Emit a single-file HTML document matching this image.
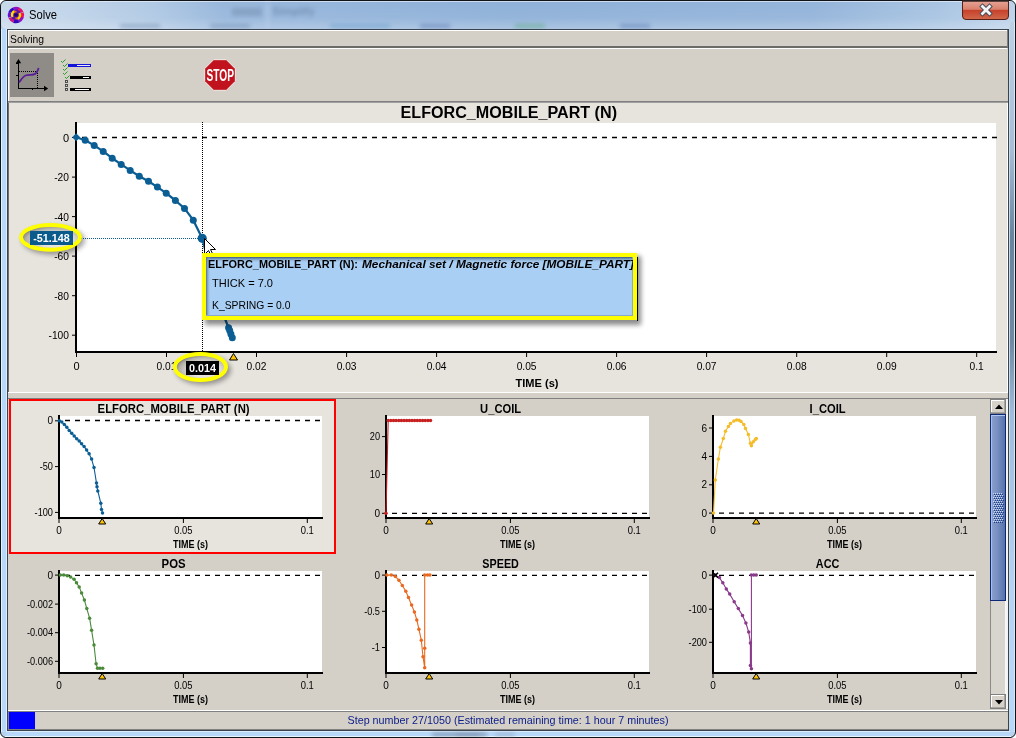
<!DOCTYPE html>
<html><head><meta charset="utf-8"><title>Solve</title>
<style>html,body{margin:0;padding:0;width:1016px;height:738px;overflow:hidden;background:#ffffff;font-family:"Liberation Sans",sans-serif}svg{display:block;will-change:transform}</style>
</head><body><svg width="1016" height="738" viewBox="0 0 1016 738" font-family="Liberation Sans, sans-serif"><defs><linearGradient id="tb" x1="0" y1="0" x2="1" y2="0"><stop offset="0" stop-color="#c8d9ea"/><stop offset="0.06" stop-color="#c2d5e9"/><stop offset="0.15" stop-color="#b0c9e4"/><stop offset="0.22" stop-color="#98b7dc"/><stop offset="0.5" stop-color="#8fb1d8"/><stop offset="0.8" stop-color="#94b4da"/><stop offset="0.92" stop-color="#a8c4e2"/><stop offset="1" stop-color="#bcd2ea"/></linearGradient><linearGradient id="tbv" x1="0" y1="0" x2="0" y2="1"><stop offset="0" stop-color="#fff" stop-opacity="0"/><stop offset="0.6" stop-color="#fff" stop-opacity="0.05"/><stop offset="1" stop-color="#fff" stop-opacity="0.25"/></linearGradient><linearGradient id="rbv" x1="0" y1="0" x2="0" y2="1"><stop offset="0" stop-color="#bcd0e6"/><stop offset="0.18" stop-color="#a8bed6"/><stop offset="0.3" stop-color="#6a84a0"/><stop offset="0.45" stop-color="#7088a4"/><stop offset="0.55" stop-color="#a0bcdc"/><stop offset="0.8" stop-color="#b4d2f4"/><stop offset="1" stop-color="#b8d8fa"/></linearGradient><linearGradient id="lb" x1="0" y1="0" x2="1" y2="0"><stop offset="0" stop-color="#9ab0c8"/><stop offset="0.3" stop-color="#b8d6f4"/><stop offset="1" stop-color="#bcdaf6"/></linearGradient><linearGradient id="rb" x1="0" y1="0" x2="1" y2="0"><stop offset="0" stop-color="#a0bcdc"/><stop offset="0.7" stop-color="#b0cceb"/><stop offset="1" stop-color="#8ea8c4"/></linearGradient><linearGradient id="cls" x1="0" y1="0" x2="0" y2="1"><stop offset="0" stop-color="#e8a496"/><stop offset="0.45" stop-color="#d8806c"/><stop offset="0.5" stop-color="#c8402a"/><stop offset="1" stop-color="#d06a4c"/></linearGradient><linearGradient id="thumb" x1="0" y1="0" x2="1" y2="0"><stop offset="0" stop-color="#8ca0cc"/><stop offset="0.4" stop-color="#7a92c4"/><stop offset="1" stop-color="#5670a8"/></linearGradient><linearGradient id="ttop" x1="0" y1="0" x2="0" y2="1"><stop offset="0" stop-color="#3a5a80"/><stop offset="1" stop-color="#acd0f4" stop-opacity="0"/></linearGradient><linearGradient id="tleft" x1="0" y1="0" x2="1" y2="0"><stop offset="0" stop-color="#506c90"/><stop offset="1" stop-color="#acd0f4" stop-opacity="0"/></linearGradient><radialGradient id="lens" cx="0.58" cy="0.62" r="0.62"><stop offset="0.45" stop-color="#e6e2dc"/><stop offset="0.8" stop-color="#b4b0aa"/><stop offset="1" stop-color="#74706c"/></radialGradient><filter id="sh" x="-20%" y="-20%" width="150%" height="150%"><feGaussianBlur stdDeviation="2.5"/></filter><filter id="blur1" x="-20%" y="-50%" width="140%" height="200%"><feGaussianBlur stdDeviation="2.2"/></filter><pattern id="grip" width="2" height="2" patternUnits="userSpaceOnUse"><rect width="1" height="1" fill="#dfe6f6"/></pattern></defs><rect x="0" y="0" width="1016" height="738" fill="#ffffff"/><rect x="0.5" y="0.5" width="1015" height="737" rx="5.5" ry="5.5" fill="#b9d3ee" stroke="#101418"/><rect x="1" y="1" width="1014" height="28" rx="6" fill="url(#tb)"/><rect x="1" y="1" width="1014" height="28" rx="6" fill="url(#tbv)"/><g filter="url(#blur1)" opacity="0.4"><rect x="232" y="8" width="30" height="8" fill="#6880a0"/><rect x="266" y="2" width="3" height="26" fill="#c8d8ec"/><text x="272" y="15" font-size="11" font-weight="bold" fill="#405878">Simplify</text><rect x="120" y="24" width="40" height="4" fill="#5878a0"/><rect x="210" y="24" width="40" height="4" fill="#5878a0"/><rect x="330" y="24" width="60" height="4" fill="#5090c0"/><rect x="420" y="24" width="30" height="4" fill="#4060a0"/><rect x="515" y="24" width="30" height="4" fill="#40a060"/><rect x="620" y="24" width="30" height="4" fill="#4060a0"/></g><rect x="6" y="1" width="1004" height="1" fill="#e8f0f8" opacity="0.7"/><rect x="1" y="29" width="6" height="703" fill="#b8d8fa" /><rect x="1" y="29" width="1" height="703" fill="#dff2ff" /><rect x="6" y="29" width="1" height="703" fill="#dcecfb" /><rect x="1009" y="22" width="6" height="710" fill="url(#rbv)"/><rect x="1014" y="22" width="1" height="710" fill="#dde6ef" /><rect x="1009" y="22" width="1" height="710" fill="#c8d8e8" /><rect x="6" y="731" width="1004" height="6" fill="#b8d8fa" /><rect x="6" y="731" width="1004" height="1" fill="#dcecfb" /><rect x="5" y="736" width="1006" height="1" fill="#e8f6ff" /><g filter="url(#blur1)" opacity="0.55"><rect x="432" y="733" width="55" height="3" fill="#405068"/><rect x="455" y="733" width="25" height="3" fill="#202838"/><rect x="495" y="733" width="20" height="3" fill="#8090a8"/></g><rect x="7.5" y="29.5" width="1001" height="701" fill="none" stroke="#3a4450"/><rect x="8" y="30" width="1000" height="700" fill="#d4d0c8" /><path d="M16 15 L8.29 17.80 A8.2 8.2 0 0 1 8.63 11.41 Z" fill="#6010d8"/><path d="M16 15 L8.57 11.53 A8.2 8.2 0 0 1 13.33 7.25 Z" fill="#2808c8"/><path d="M16 15 L13.20 7.29 A8.2 8.2 0 0 1 19.59 7.63 Z" fill="#9010c0"/><path d="M16 15 L18.80 7.29 A8.2 8.2 0 0 1 23.49 11.66 Z" fill="#e01070"/><path d="M16 15 L23.71 12.20 A8.2 8.2 0 0 1 23.37 18.59 Z" fill="#f01060"/><path d="M16 15 L23.71 17.80 A8.2 8.2 0 0 1 19.34 22.49 Z" fill="#9010c8"/><path d="M16 15 L19.47 22.43 A8.2 8.2 0 0 1 13.06 22.66 Z" fill="#3008c0"/><path d="M16 15 L13.20 22.71 A8.2 8.2 0 0 1 8.51 18.34 Z" fill="#d01080"/><circle cx="16" cy="15" r="5.3" fill="#5818a0"/><path d="M12.5 17 A4 4 0 0 1 14.5 11.2" stroke="#ffe000" stroke-width="2.4" fill="none"/><path d="M19.5 13 A4 4 0 0 1 17.5 18.8" stroke="#ffd000" stroke-width="2.4" fill="none"/><path d="M14.5 11.2 L16.5 12" stroke="#ff6020" stroke-width="1.5"/><path d="M17.5 18.8 L15.5 18" stroke="#ff6020" stroke-width="1.5"/><circle cx="16" cy="15" r="1.8" fill="#180070"/><text x="29" y="19" font-size="12" font-weight="normal" text-anchor="start" fill="#000" textLength="28" lengthAdjust="spacingAndGlyphs" >Solve</text><path d="M962.5 1 L962.5 16 Q962.5 19.5 966 19.5 L1005 19.5 Q1008.5 19.5 1008.5 16 L1008.5 1 Z" fill="url(#cls)" stroke="#5a2018"/><path d="M962.5 1 L1008.5 1" stroke="#202428"/><path d="M982.5 6.5 L989.5 13.5 M989.5 6.5 L982.5 13.5" stroke="#404858" stroke-width="4.6" stroke-linecap="square"/><path d="M982.5 6.5 L989.5 13.5 M989.5 6.5 L982.5 13.5" stroke="#f4f4f4" stroke-width="2.8" stroke-linecap="square"/><rect x="8" y="30" width="999" height="1" fill="#ffffff" /><rect x="8" y="30" width="1" height="17" fill="#ffffff" /><rect x="8" y="46" width="1000" height="2" fill="#6c6c68" /><rect x="1007" y="30" width="1" height="17" fill="#808080" /><text x="10" y="43" font-size="11" font-weight="normal" text-anchor="start" fill="#000" textLength="34" lengthAdjust="spacingAndGlyphs" >Solving</text><rect x="8" y="48" width="999" height="1" fill="#ffffff" /><rect x="8" y="48" width="1" height="53" fill="#ffffff" /><rect x="8" y="101" width="1000" height="1" fill="#808080" /><rect x="8" y="102" width="1000" height="1" fill="#a0a0a0" /><rect x="10" y="53" width="44" height="44" fill="#8f8b86" /><rect x="18" y="60" width="1" height="29" fill="#000" /><path d="M15.8 63.2 L18.5 59 L21.2 63.2 Z" fill="#000"/><rect x="16" y="63" width="2" height="1" fill="#000" /><rect x="16" y="75" width="2" height="1" fill="#000" /><rect x="18" y="88" width="29" height="1" fill="#000" /><path d="M44 85.8 L48.2 88.5 L44 91.2 Z" fill="#000"/><rect x="32" y="89" width="1" height="1" fill="#000" /><rect x="19" y="71" width="1" height="1" fill="#000" /><rect x="21" y="71" width="1" height="1" fill="#000" /><rect x="23" y="71" width="1" height="1" fill="#000" /><rect x="25" y="71" width="1" height="1" fill="#000" /><rect x="27" y="71" width="1" height="1" fill="#000" /><rect x="29" y="71" width="1" height="1" fill="#000" /><rect x="31" y="71" width="1" height="1" fill="#000" /><rect x="33" y="71" width="1" height="1" fill="#000" /><rect x="35" y="71" width="1" height="1" fill="#000" /><rect x="37" y="73" width="1" height="1" fill="#000" /><rect x="37" y="75" width="1" height="1" fill="#000" /><rect x="37" y="77" width="1" height="1" fill="#000" /><rect x="37" y="79" width="1" height="1" fill="#000" /><rect x="37" y="81" width="1" height="1" fill="#000" /><rect x="37" y="83" width="1" height="1" fill="#000" /><rect x="37" y="85" width="1" height="1" fill="#000" /><rect x="37" y="87" width="1" height="1" fill="#000" /><path d="M19 82.4 C21 80 23 76.5 25.5 75.5 C28 74.5 31 75 33.5 74.5 C36 74 37.5 72 38.6 67.9" stroke="#5a1c98" stroke-width="1.8" fill="none"/><path d="M61 61.0 L62.5 62.5 L65.5 59.5" stroke="#18a018" stroke-width="0.95" fill="none"/><path d="M63 65.0 L64.5 66.5 L67.5 63.5" stroke="#18a018" stroke-width="0.95" fill="none"/><path d="M63 69.0 L64.5 70.5 L67.5 67.5" stroke="#18a018" stroke-width="0.95" fill="none"/><path d="M63 73.0 L64.5 74.5 L67.5 71.5" stroke="#18a018" stroke-width="0.95" fill="none"/><path d="M65 77.0 L66.5 78.5 L69.5 75.5" stroke="#18a018" stroke-width="0.95" fill="none"/><rect x="65.5" y="80.5" width="2" height="2" fill="#d8d8d8" stroke="#404040" stroke-width="0.9"/><rect x="65.5" y="84.5" width="2" height="2" fill="#d8d8d8" stroke="#404040" stroke-width="0.9"/><rect x="65.5" y="88.5" width="2" height="2" fill="#d8d8d8" stroke="#404040" stroke-width="0.9"/><rect x="68" y="64" width="23" height="3" fill="#1414d8" /><rect x="77" y="65" width="13" height="1" fill="#e8e8ff" /><rect x="70" y="76" width="21" height="3" fill="#000" /><rect x="83" y="77" width="6" height="1" fill="#fff" /><rect x="70" y="88" width="21" height="3" fill="#000" /><rect x="75" y="89" width="14" height="1" fill="#fff" /><polygon points="235.34,81.35 226.35,90.34 213.65,90.34 204.66,81.35 204.66,68.65 213.65,59.66 226.35,59.66 235.34,68.65" fill="#c0131e" stroke="#f0eeea" stroke-width="1"/><text x="220.3" y="80.6" font-size="16" font-weight="bold" text-anchor="middle" fill="#fff" textLength="27.5" lengthAdjust="spacingAndGlyphs" >STOP</text><rect x="8" y="103" width="1000" height="289" fill="#e7e3dd" /><rect x="8" y="103" width="1" height="289" fill="#707070" /><rect x="1007" y="103" width="1" height="290" fill="#ffffff" /><rect x="8" y="392" width="1000" height="1" fill="#ffffff" /><rect x="8" y="398" width="1000" height="1" fill="#808080" /><text x="508.8" y="118" font-size="16" font-weight="bold" text-anchor="middle" fill="#000" textLength="216.4" lengthAdjust="spacingAndGlyphs" >ELFORC_MOBILE_PART (N)</text><rect x="77" y="123" width="919" height="228" fill="#ffffff" /><line x1="77" y1="137.5" x2="997" y2="137.5" stroke="#000" stroke-width="1.7" stroke-dasharray="5 5" stroke-dashoffset="5"/><rect x="75" y="122" width="2" height="231" fill="#000" /><rect x="75" y="351" width="922" height="2" fill="#000" /><line x1="72" y1="137.5" x2="75" y2="137.5" stroke="#000" stroke-width="1"/><text x="69" y="141.5" font-size="11" font-weight="normal" text-anchor="end" fill="#000" >0</text><line x1="72" y1="177.1" x2="75" y2="177.1" stroke="#000" stroke-width="1"/><text x="69" y="181.1" font-size="11" font-weight="normal" text-anchor="end" fill="#000" textLength="14.79" lengthAdjust="spacingAndGlyphs" >-20</text><line x1="72" y1="216.6" x2="75" y2="216.6" stroke="#000" stroke-width="1"/><text x="69" y="220.6" font-size="11" font-weight="normal" text-anchor="end" fill="#000" textLength="14.79" lengthAdjust="spacingAndGlyphs" >-40</text><line x1="72" y1="256.1" x2="75" y2="256.1" stroke="#000" stroke-width="1"/><text x="69" y="260.1" font-size="11" font-weight="normal" text-anchor="end" fill="#000" textLength="14.79" lengthAdjust="spacingAndGlyphs" >-60</text><line x1="72" y1="295.7" x2="75" y2="295.7" stroke="#000" stroke-width="1"/><text x="69" y="299.7" font-size="11" font-weight="normal" text-anchor="end" fill="#000" textLength="14.79" lengthAdjust="spacingAndGlyphs" >-80</text><line x1="72" y1="335.2" x2="75" y2="335.2" stroke="#000" stroke-width="1"/><text x="69" y="339.2" font-size="11" font-weight="normal" text-anchor="end" fill="#000" textLength="20.48" lengthAdjust="spacingAndGlyphs" >-100</text><line x1="76.5" y1="353" x2="76.5" y2="357" stroke="#000" stroke-width="1"/><text x="76.5" y="370" font-size="11" font-weight="normal" text-anchor="middle" fill="#000" >0</text><line x1="166.5" y1="353" x2="166.5" y2="357" stroke="#000" stroke-width="1"/><text x="166.5" y="370" font-size="11" font-weight="normal" text-anchor="middle" fill="#000" textLength="19.91" lengthAdjust="spacingAndGlyphs" >0.01</text><line x1="256.5" y1="353" x2="256.5" y2="357" stroke="#000" stroke-width="1"/><text x="256.5" y="370" font-size="11" font-weight="normal" text-anchor="middle" fill="#000" textLength="19.91" lengthAdjust="spacingAndGlyphs" >0.02</text><line x1="346.6" y1="353" x2="346.6" y2="357" stroke="#000" stroke-width="1"/><text x="346.6" y="370" font-size="11" font-weight="normal" text-anchor="middle" fill="#000" textLength="19.91" lengthAdjust="spacingAndGlyphs" >0.03</text><line x1="436.6" y1="353" x2="436.6" y2="357" stroke="#000" stroke-width="1"/><text x="436.6" y="370" font-size="11" font-weight="normal" text-anchor="middle" fill="#000" textLength="19.91" lengthAdjust="spacingAndGlyphs" >0.04</text><line x1="526.6" y1="353" x2="526.6" y2="357" stroke="#000" stroke-width="1"/><text x="526.6" y="370" font-size="11" font-weight="normal" text-anchor="middle" fill="#000" textLength="19.91" lengthAdjust="spacingAndGlyphs" >0.05</text><line x1="616.6" y1="353" x2="616.6" y2="357" stroke="#000" stroke-width="1"/><text x="616.6" y="370" font-size="11" font-weight="normal" text-anchor="middle" fill="#000" textLength="19.91" lengthAdjust="spacingAndGlyphs" >0.06</text><line x1="706.6" y1="353" x2="706.6" y2="357" stroke="#000" stroke-width="1"/><text x="706.6" y="370" font-size="11" font-weight="normal" text-anchor="middle" fill="#000" textLength="19.91" lengthAdjust="spacingAndGlyphs" >0.07</text><line x1="796.7" y1="353" x2="796.7" y2="357" stroke="#000" stroke-width="1"/><text x="796.7" y="370" font-size="11" font-weight="normal" text-anchor="middle" fill="#000" textLength="19.91" lengthAdjust="spacingAndGlyphs" >0.08</text><line x1="886.7" y1="353" x2="886.7" y2="357" stroke="#000" stroke-width="1"/><text x="886.7" y="370" font-size="11" font-weight="normal" text-anchor="middle" fill="#000" textLength="19.91" lengthAdjust="spacingAndGlyphs" >0.09</text><line x1="976.7" y1="353" x2="976.7" y2="357" stroke="#000" stroke-width="1"/><text x="976.7" y="370" font-size="11" font-weight="normal" text-anchor="middle" fill="#000" textLength="14.22" lengthAdjust="spacingAndGlyphs" >0.1</text><text x="537" y="387" font-size="11" font-weight="bold" text-anchor="middle" fill="#000" textLength="43" lengthAdjust="spacingAndGlyphs" >TIME (s)</text><line x1="202.5" y1="122" x2="202.5" y2="351" stroke="#000" stroke-width="1" stroke-dasharray="1 1"/><line x1="77" y1="238.5" x2="202" y2="238.5" stroke="#0b5e94" stroke-width="1" stroke-dasharray="1 1"/><path d="M76.2,137.3 L85.2,140.2 L94.2,145.4 L103.2,151.4 L112.2,158.2 L121.2,164.4 L130.2,170.4 L139.3,176.2 L148.5,181.3 L157.4,187.1 L166.2,193.2 L175.4,200.5 L184.5,208.4 L193.3,220.2 L202.2,238.3 L211.1,272 L213,279.9 L215.6,288.8 L223.3,314.5 L228.6,327.8 L229.7,330.5 L230.9,334 L232.3,337.8" stroke="#0b5e94" stroke-width="2.25" fill="none" stroke-linejoin="round"/><path d="M72.2 137.3 L76.2 133.3 L80.2 137.3 L76.2 141.3 Z" fill="#0b5e94"/><circle cx="85.2" cy="140.2" r="3.5" fill="#0b5e94"/><circle cx="94.2" cy="145.4" r="3.5" fill="#0b5e94"/><circle cx="103.2" cy="151.4" r="3.5" fill="#0b5e94"/><circle cx="112.2" cy="158.2" r="3.5" fill="#0b5e94"/><circle cx="121.2" cy="164.4" r="3.5" fill="#0b5e94"/><circle cx="130.2" cy="170.4" r="3.5" fill="#0b5e94"/><circle cx="139.3" cy="176.2" r="3.5" fill="#0b5e94"/><circle cx="148.5" cy="181.3" r="3.5" fill="#0b5e94"/><circle cx="157.4" cy="187.1" r="3.5" fill="#0b5e94"/><circle cx="166.2" cy="193.2" r="3.5" fill="#0b5e94"/><circle cx="175.4" cy="200.5" r="3.5" fill="#0b5e94"/><circle cx="184.5" cy="208.4" r="3.5" fill="#0b5e94"/><circle cx="193.3" cy="220.2" r="3.5" fill="#0b5e94"/><circle cx="202.2" cy="238.3" r="4.6" fill="#0b5e94"/><circle cx="228.6" cy="327.8" r="3.5" fill="#0b5e94"/><circle cx="229.7" cy="330.5" r="3.5" fill="#0b5e94"/><circle cx="230.9" cy="334" r="3.5" fill="#0b5e94"/><circle cx="232.3" cy="337.8" r="3.5" fill="#0b5e94"/><path d="M229.5 360 L233.5 353.5 L237.5 360 Z" fill="#ffc400" stroke="#000" stroke-width="1"/><path d="M204.5 238.5 L204.5 254.5 L208.5 250.5 L211.5 256.5 L213.5 255.5 L210.5 249.5 L215.5 249.5 Z" fill="#fff" stroke="#000" stroke-width="1"/><rect x="205" y="256" width="436" height="69" fill="#000" opacity="0.45" filter="url(#sh)"/><rect x="202" y="253" width="435" height="67" fill="#ffff00" /><rect x="206" y="257" width="427" height="59" fill="#aacff4" /><rect x="206" y="257" width="427" height="6" fill="url(#ttop)" /><rect x="206" y="257" width="5" height="59" fill="url(#tleft)" /><rect x="206" y="315" width="427" height="1" fill="#8aa8cc" /><rect x="632" y="257" width="1" height="59" fill="#8aa8cc" /><rect x="637" y="257" width="1" height="64" fill="#000" /><text x="208" y="268" font-size="11" font-weight="bold" text-anchor="start" fill="#000" textLength="150" lengthAdjust="spacingAndGlyphs" >ELFORC_MOBILE_PART (N):</text><svg x="206" y="257" width="427" height="20" overflow="hidden"><text x="156" y="11" font-size="11.3" font-weight="bold" font-style="italic" textLength="272" lengthAdjust="spacingAndGlyphs">Mechanical set / Magnetic force [MOBILE_PART]</text></svg><text x="212" y="287" font-size="11" font-weight="normal" text-anchor="start" fill="#000" textLength="61" lengthAdjust="spacingAndGlyphs" >THICK = 7.0</text><text x="212" y="309" font-size="11" font-weight="normal" text-anchor="start" fill="#000" textLength="78.5" lengthAdjust="spacingAndGlyphs" >K_SPRING = 0.0</text><ellipse cx="53.5" cy="240.3" rx="31.5" ry="14.4" fill="#000" opacity="0.35" filter="url(#sh)"/><ellipse cx="50.5" cy="237.3" rx="29.5" ry="12.4" fill="url(#lens)" stroke="#ffff00" stroke-width="4"/><rect x="30" y="231" width="43" height="14" fill="#0b5a8c" /><text x="51.5" y="242" font-size="11" font-weight="bold" text-anchor="middle" fill="#fff" textLength="36.5" lengthAdjust="spacingAndGlyphs" >-51.148</text><ellipse cx="203.4" cy="370" rx="27.6" ry="15" fill="#000" opacity="0.35" filter="url(#sh)"/><ellipse cx="200.4" cy="367" rx="25.6" ry="13" fill="url(#lens)" stroke="#ffff00" stroke-width="4"/><rect x="186" y="361" width="33" height="14" fill="#000" /><text x="202.5" y="372" font-size="11" font-weight="bold" text-anchor="middle" fill="#fff" textLength="27" lengthAdjust="spacingAndGlyphs" >0.014</text><rect x="8" y="399" width="982" height="310" fill="#d4d0c8" /><rect x="9" y="399" width="327" height="155" fill="#ff0000" /><rect x="11" y="401" width="323" height="151" fill="#e7e3dd" /><text x="173.6" y="413" font-size="12.8" font-weight="bold" text-anchor="middle" fill="#000" textLength="152" lengthAdjust="spacingAndGlyphs" >ELFORC_MOBILE_PART (N)</text><rect x="60" y="416" width="262" height="101" fill="#fff" /><line x1="60" y1="420.5" x2="322" y2="420.5" stroke="#000" stroke-width="1.3" stroke-dasharray="5 5" stroke-dashoffset="5"/><rect x="58" y="415" width="2" height="104" fill="#000" /><rect x="58" y="517" width="265" height="2" fill="#000" /><line x1="55" y1="420.8" x2="58" y2="420.8" stroke="#000" stroke-width="1"/><text x="53" y="424.4" font-size="10" font-weight="normal" text-anchor="end" fill="#000" >0</text><line x1="55" y1="466.6" x2="58" y2="466.6" stroke="#000" stroke-width="1"/><text x="53" y="470.2" font-size="10" font-weight="normal" text-anchor="end" fill="#000" textLength="13.3" lengthAdjust="spacingAndGlyphs" >-50</text><line x1="55" y1="512.4" x2="58" y2="512.4" stroke="#000" stroke-width="1"/><text x="53" y="516.0" font-size="10" font-weight="normal" text-anchor="end" fill="#000" textLength="18.41" lengthAdjust="spacingAndGlyphs" >-100</text><line x1="59" y1="519" x2="59" y2="523" stroke="#000" stroke-width="1"/><text x="59" y="534" font-size="10" font-weight="normal" text-anchor="middle" fill="#000" >0</text><line x1="183.4" y1="519" x2="183.4" y2="523" stroke="#000" stroke-width="1"/><text x="183.4" y="534" font-size="10" font-weight="normal" text-anchor="middle" fill="#000" textLength="18.3" lengthAdjust="spacingAndGlyphs" >0.05</text><line x1="307.3" y1="519" x2="307.3" y2="523" stroke="#000" stroke-width="1"/><text x="307.3" y="534" font-size="10" font-weight="normal" text-anchor="middle" fill="#000" textLength="13.07" lengthAdjust="spacingAndGlyphs" >0.1</text><text x="190.5" y="548" font-size="11" font-weight="bold" text-anchor="middle" fill="#000" textLength="35" lengthAdjust="spacingAndGlyphs" >TIME (s)</text><path d="M98.7 524 L102.2 518.5 L105.7 524 Z" fill="#ffc400" stroke="#000" stroke-width="1"/><path d="M59.3,420.8 L61.8,422.1 L64.3,424.5 L66.8,427.2 L69.2,430.4 L71.7,433.3 L74.2,436.0 L76.7,438.8 L79.2,441.0 L81.6,443.8 L84.1,446.6 L86.6,450.0 L89.1,453.7 L91.6,459.1 L94.0,467.5 L96.5,483.1 L97.0,486.8 L97.8,490.9 L100.8,503.2 L101.5,509.4 L102.5,512.9" stroke="#0b5e94" stroke-width="1.1" fill="none"/><circle cx="59.3" cy="420.8" r="1.75" fill="#0b5e94"/><circle cx="61.8" cy="422.1" r="1.75" fill="#0b5e94"/><circle cx="64.3" cy="424.5" r="1.75" fill="#0b5e94"/><circle cx="66.8" cy="427.2" r="1.75" fill="#0b5e94"/><circle cx="69.2" cy="430.4" r="1.75" fill="#0b5e94"/><circle cx="71.7" cy="433.3" r="1.75" fill="#0b5e94"/><circle cx="74.2" cy="436.0" r="1.75" fill="#0b5e94"/><circle cx="76.7" cy="438.8" r="1.75" fill="#0b5e94"/><circle cx="79.2" cy="441.0" r="1.75" fill="#0b5e94"/><circle cx="81.6" cy="443.8" r="1.75" fill="#0b5e94"/><circle cx="84.1" cy="446.6" r="1.75" fill="#0b5e94"/><circle cx="86.6" cy="450.0" r="1.75" fill="#0b5e94"/><circle cx="89.1" cy="453.7" r="1.75" fill="#0b5e94"/><circle cx="91.6" cy="459.1" r="1.75" fill="#0b5e94"/><circle cx="94.0" cy="467.5" r="1.75" fill="#0b5e94"/><circle cx="96.5" cy="483.1" r="1.75" fill="#0b5e94"/><circle cx="97.0" cy="486.8" r="1.75" fill="#0b5e94"/><circle cx="97.8" cy="490.9" r="1.75" fill="#0b5e94"/><circle cx="100.8" cy="503.2" r="1.75" fill="#0b5e94"/><circle cx="101.5" cy="509.4" r="1.75" fill="#0b5e94"/><circle cx="102.5" cy="512.9" r="1.75" fill="#0b5e94"/><text x="500.6" y="413" font-size="12.8" font-weight="bold" text-anchor="middle" fill="#000" textLength="41" lengthAdjust="spacingAndGlyphs" >U_COIL</text><rect x="387" y="416" width="262" height="101" fill="#fff" /><line x1="387" y1="513.3" x2="649" y2="513.3" stroke="#000" stroke-width="1.3" stroke-dasharray="5 5" stroke-dashoffset="5"/><rect x="385" y="415" width="2" height="104" fill="#000" /><rect x="385" y="517" width="265" height="2" fill="#000" /><line x1="382" y1="436.6" x2="385" y2="436.6" stroke="#000" stroke-width="1"/><text x="380" y="440.2" font-size="10" font-weight="normal" text-anchor="end" fill="#000" textLength="10.23" lengthAdjust="spacingAndGlyphs" >20</text><line x1="382" y1="474.5" x2="385" y2="474.5" stroke="#000" stroke-width="1"/><text x="380" y="478.1" font-size="10" font-weight="normal" text-anchor="end" fill="#000" textLength="10.23" lengthAdjust="spacingAndGlyphs" >10</text><line x1="382" y1="513.3" x2="385" y2="513.3" stroke="#000" stroke-width="1"/><text x="380" y="516.9" font-size="10" font-weight="normal" text-anchor="end" fill="#000" >0</text><line x1="386" y1="519" x2="386" y2="523" stroke="#000" stroke-width="1"/><text x="386" y="534" font-size="10" font-weight="normal" text-anchor="middle" fill="#000" >0</text><line x1="510.4" y1="519" x2="510.4" y2="523" stroke="#000" stroke-width="1"/><text x="510.4" y="534" font-size="10" font-weight="normal" text-anchor="middle" fill="#000" textLength="18.3" lengthAdjust="spacingAndGlyphs" >0.05</text><line x1="634.3" y1="519" x2="634.3" y2="523" stroke="#000" stroke-width="1"/><text x="634.3" y="534" font-size="10" font-weight="normal" text-anchor="middle" fill="#000" textLength="13.07" lengthAdjust="spacingAndGlyphs" >0.1</text><text x="517.5" y="548" font-size="11" font-weight="bold" text-anchor="middle" fill="#000" textLength="35" lengthAdjust="spacingAndGlyphs" >TIME (s)</text><path d="M425.7 524 L429.2 518.5 L432.7 524 Z" fill="#ffc400" stroke="#000" stroke-width="1"/><path d="M386.0,513.3 L388.2,420.6 L390.8,420.6 L393.5,420.6 L396.1,420.6 L398.8,420.6 L401.4,420.6 L404.1,420.6 L406.7,420.6 L409.4,420.6 L412.0,420.6 L414.6,420.6 L417.3,420.6 L419.9,420.6 L422.6,420.6 L425.2,420.6 L427.9,420.6 L430.5,420.6" stroke="#c82020" stroke-width="1.1" fill="none"/><circle cx="386.0" cy="513.3" r="1.75" fill="#c82020"/><circle cx="388.2" cy="420.6" r="1.75" fill="#c82020"/><circle cx="390.8" cy="420.6" r="1.75" fill="#c82020"/><circle cx="393.5" cy="420.6" r="1.75" fill="#c82020"/><circle cx="396.1" cy="420.6" r="1.75" fill="#c82020"/><circle cx="398.8" cy="420.6" r="1.75" fill="#c82020"/><circle cx="401.4" cy="420.6" r="1.75" fill="#c82020"/><circle cx="404.1" cy="420.6" r="1.75" fill="#c82020"/><circle cx="406.7" cy="420.6" r="1.75" fill="#c82020"/><circle cx="409.4" cy="420.6" r="1.75" fill="#c82020"/><circle cx="412.0" cy="420.6" r="1.75" fill="#c82020"/><circle cx="414.6" cy="420.6" r="1.75" fill="#c82020"/><circle cx="417.3" cy="420.6" r="1.75" fill="#c82020"/><circle cx="419.9" cy="420.6" r="1.75" fill="#c82020"/><circle cx="422.6" cy="420.6" r="1.75" fill="#c82020"/><circle cx="425.2" cy="420.6" r="1.75" fill="#c82020"/><circle cx="427.9" cy="420.6" r="1.75" fill="#c82020"/><circle cx="430.5" cy="420.6" r="1.75" fill="#c82020"/><text x="827.6" y="413" font-size="12.8" font-weight="bold" text-anchor="middle" fill="#000" textLength="36" lengthAdjust="spacingAndGlyphs" >I_COIL</text><rect x="714" y="416" width="262" height="101" fill="#fff" /><line x1="714" y1="513.1" x2="976" y2="513.1" stroke="#000" stroke-width="1.3" stroke-dasharray="5 5" stroke-dashoffset="5"/><rect x="712" y="415" width="2" height="104" fill="#000" /><rect x="712" y="517" width="265" height="2" fill="#000" /><line x1="709" y1="428" x2="712" y2="428" stroke="#000" stroke-width="1"/><text x="707" y="431.6" font-size="10" font-weight="normal" text-anchor="end" fill="#000" >6</text><line x1="709" y1="456.4" x2="712" y2="456.4" stroke="#000" stroke-width="1"/><text x="707" y="460.0" font-size="10" font-weight="normal" text-anchor="end" fill="#000" >4</text><line x1="709" y1="484.8" x2="712" y2="484.8" stroke="#000" stroke-width="1"/><text x="707" y="488.4" font-size="10" font-weight="normal" text-anchor="end" fill="#000" >2</text><line x1="709" y1="513.1" x2="712" y2="513.1" stroke="#000" stroke-width="1"/><text x="707" y="516.7" font-size="10" font-weight="normal" text-anchor="end" fill="#000" >0</text><line x1="713" y1="519" x2="713" y2="523" stroke="#000" stroke-width="1"/><text x="713" y="534" font-size="10" font-weight="normal" text-anchor="middle" fill="#000" >0</text><line x1="837.4" y1="519" x2="837.4" y2="523" stroke="#000" stroke-width="1"/><text x="837.4" y="534" font-size="10" font-weight="normal" text-anchor="middle" fill="#000" textLength="18.3" lengthAdjust="spacingAndGlyphs" >0.05</text><line x1="961.3" y1="519" x2="961.3" y2="523" stroke="#000" stroke-width="1"/><text x="961.3" y="534" font-size="10" font-weight="normal" text-anchor="middle" fill="#000" textLength="13.07" lengthAdjust="spacingAndGlyphs" >0.1</text><text x="844.5" y="548" font-size="11" font-weight="bold" text-anchor="middle" fill="#000" textLength="35" lengthAdjust="spacingAndGlyphs" >TIME (s)</text><path d="M752.7 524 L756.2 518.5 L759.7 524 Z" fill="#ffc400" stroke="#000" stroke-width="1"/><path d="M713.5,513.0 L715.3,480.0 L718.4,459.0 L720.4,447.2 L723.3,438.6 L725.5,431.3 L728.4,426.4 L730.4,423.4 L733.9,420.9 L736.6,420.0 L739.1,420.2 L741.0,421.5 L743.8,424.4 L745.5,428.5 L748.4,434.4 L750.4,443.3 L751.4,445.8 L753.3,441.8 L755.3,439.4 L756.3,438.4" stroke="#f4bc28" stroke-width="1.1" fill="none"/><circle cx="713.5" cy="513.0" r="1.75" fill="#f4bc28"/><circle cx="715.3" cy="480.0" r="1.75" fill="#f4bc28"/><circle cx="718.4" cy="459.0" r="1.75" fill="#f4bc28"/><circle cx="720.4" cy="447.2" r="1.75" fill="#f4bc28"/><circle cx="723.3" cy="438.6" r="1.75" fill="#f4bc28"/><circle cx="725.5" cy="431.3" r="1.75" fill="#f4bc28"/><circle cx="728.4" cy="426.4" r="1.75" fill="#f4bc28"/><circle cx="730.4" cy="423.4" r="1.75" fill="#f4bc28"/><circle cx="733.9" cy="420.9" r="1.75" fill="#f4bc28"/><circle cx="736.6" cy="420.0" r="1.75" fill="#f4bc28"/><circle cx="739.1" cy="420.2" r="1.75" fill="#f4bc28"/><circle cx="741.0" cy="421.5" r="1.75" fill="#f4bc28"/><circle cx="743.8" cy="424.4" r="1.75" fill="#f4bc28"/><circle cx="745.5" cy="428.5" r="1.75" fill="#f4bc28"/><circle cx="748.4" cy="434.4" r="1.75" fill="#f4bc28"/><circle cx="750.4" cy="443.3" r="1.75" fill="#f4bc28"/><circle cx="751.4" cy="445.8" r="1.75" fill="#f4bc28"/><circle cx="753.3" cy="441.8" r="1.75" fill="#f4bc28"/><circle cx="755.3" cy="439.4" r="1.75" fill="#f4bc28"/><circle cx="756.3" cy="438.4" r="1.75" fill="#f4bc28"/><text x="173.6" y="568" font-size="12.8" font-weight="bold" text-anchor="middle" fill="#000" textLength="24" lengthAdjust="spacingAndGlyphs" >POS</text><rect x="60" y="571" width="262" height="101" fill="#fff" /><line x1="60" y1="575.3" x2="322" y2="575.3" stroke="#000" stroke-width="1.3" stroke-dasharray="5 5" stroke-dashoffset="5"/><rect x="58" y="570" width="2" height="104" fill="#000" /><rect x="58" y="672" width="265" height="2" fill="#000" /><line x1="55" y1="575.1" x2="58" y2="575.1" stroke="#000" stroke-width="1"/><text x="53" y="578.7" font-size="10" font-weight="normal" text-anchor="end" fill="#000" >0</text><line x1="55" y1="604.1" x2="58" y2="604.1" stroke="#000" stroke-width="1"/><text x="53" y="607.7" font-size="10" font-weight="normal" text-anchor="end" fill="#000" textLength="26.09" lengthAdjust="spacingAndGlyphs" >-0.002</text><line x1="55" y1="632.7" x2="58" y2="632.7" stroke="#000" stroke-width="1"/><text x="53" y="636.3" font-size="10" font-weight="normal" text-anchor="end" fill="#000" textLength="26.09" lengthAdjust="spacingAndGlyphs" >-0.004</text><line x1="55" y1="661.3" x2="58" y2="661.3" stroke="#000" stroke-width="1"/><text x="53" y="664.9" font-size="10" font-weight="normal" text-anchor="end" fill="#000" textLength="26.09" lengthAdjust="spacingAndGlyphs" >-0.006</text><line x1="59" y1="674" x2="59" y2="678" stroke="#000" stroke-width="1"/><text x="59" y="689" font-size="10" font-weight="normal" text-anchor="middle" fill="#000" >0</text><line x1="183.4" y1="674" x2="183.4" y2="678" stroke="#000" stroke-width="1"/><text x="183.4" y="689" font-size="10" font-weight="normal" text-anchor="middle" fill="#000" textLength="18.3" lengthAdjust="spacingAndGlyphs" >0.05</text><line x1="307.3" y1="674" x2="307.3" y2="678" stroke="#000" stroke-width="1"/><text x="307.3" y="689" font-size="10" font-weight="normal" text-anchor="middle" fill="#000" textLength="13.07" lengthAdjust="spacingAndGlyphs" >0.1</text><text x="190.5" y="703" font-size="11" font-weight="bold" text-anchor="middle" fill="#000" textLength="35" lengthAdjust="spacingAndGlyphs" >TIME (s)</text><path d="M98.7 679 L102.2 673.5 L105.7 679 Z" fill="#ffc400" stroke="#000" stroke-width="1"/><path d="M60.3,575.1 L63.7,575.1 L67.2,575.8 L70.6,576.9 L74.1,579.3 L76.5,582.7 L79.2,586.9 L81.6,593.1 L84.4,600.0 L86.8,608.6 L89.6,618.2 L91.6,630.3 L94.0,645.1 L96.1,663.7 L97.5,668.2 L99.9,668.2 L102.7,668.2" stroke="#4a8a3a" stroke-width="1.1" fill="none"/><circle cx="60.3" cy="575.1" r="1.75" fill="#4a8a3a"/><circle cx="63.7" cy="575.1" r="1.75" fill="#4a8a3a"/><circle cx="67.2" cy="575.8" r="1.75" fill="#4a8a3a"/><circle cx="70.6" cy="576.9" r="1.75" fill="#4a8a3a"/><circle cx="74.1" cy="579.3" r="1.75" fill="#4a8a3a"/><circle cx="76.5" cy="582.7" r="1.75" fill="#4a8a3a"/><circle cx="79.2" cy="586.9" r="1.75" fill="#4a8a3a"/><circle cx="81.6" cy="593.1" r="1.75" fill="#4a8a3a"/><circle cx="84.4" cy="600.0" r="1.75" fill="#4a8a3a"/><circle cx="86.8" cy="608.6" r="1.75" fill="#4a8a3a"/><circle cx="89.6" cy="618.2" r="1.75" fill="#4a8a3a"/><circle cx="91.6" cy="630.3" r="1.75" fill="#4a8a3a"/><circle cx="94.0" cy="645.1" r="1.75" fill="#4a8a3a"/><circle cx="96.1" cy="663.7" r="1.75" fill="#4a8a3a"/><circle cx="97.5" cy="668.2" r="1.75" fill="#4a8a3a"/><circle cx="99.9" cy="668.2" r="1.75" fill="#4a8a3a"/><circle cx="102.7" cy="668.2" r="1.75" fill="#4a8a3a"/><text x="500.6" y="568" font-size="12.8" font-weight="bold" text-anchor="middle" fill="#000" textLength="36.5" lengthAdjust="spacingAndGlyphs" >SPEED</text><rect x="387" y="571" width="262" height="101" fill="#fff" /><line x1="387" y1="575.3" x2="649" y2="575.3" stroke="#000" stroke-width="1.3" stroke-dasharray="5 5" stroke-dashoffset="5"/><rect x="385" y="570" width="2" height="104" fill="#000" /><rect x="385" y="672" width="265" height="2" fill="#000" /><line x1="382" y1="575.1" x2="385" y2="575.1" stroke="#000" stroke-width="1"/><text x="380" y="578.7" font-size="10" font-weight="normal" text-anchor="end" fill="#000" >0</text><line x1="382" y1="611.3" x2="385" y2="611.3" stroke="#000" stroke-width="1"/><text x="380" y="614.9" font-size="10" font-weight="normal" text-anchor="end" fill="#000" textLength="15.85" lengthAdjust="spacingAndGlyphs" >-0.5</text><line x1="382" y1="647.5" x2="385" y2="647.5" stroke="#000" stroke-width="1"/><text x="380" y="651.1" font-size="10" font-weight="normal" text-anchor="end" fill="#000" textLength="8.18" lengthAdjust="spacingAndGlyphs" >-1</text><line x1="386" y1="674" x2="386" y2="678" stroke="#000" stroke-width="1"/><text x="386" y="689" font-size="10" font-weight="normal" text-anchor="middle" fill="#000" >0</text><line x1="510.4" y1="674" x2="510.4" y2="678" stroke="#000" stroke-width="1"/><text x="510.4" y="689" font-size="10" font-weight="normal" text-anchor="middle" fill="#000" textLength="18.3" lengthAdjust="spacingAndGlyphs" >0.05</text><line x1="634.3" y1="674" x2="634.3" y2="678" stroke="#000" stroke-width="1"/><text x="634.3" y="689" font-size="10" font-weight="normal" text-anchor="middle" fill="#000" textLength="13.07" lengthAdjust="spacingAndGlyphs" >0.1</text><text x="517.5" y="703" font-size="11" font-weight="bold" text-anchor="middle" fill="#000" textLength="35" lengthAdjust="spacingAndGlyphs" >TIME (s)</text><path d="M425.7 679 L429.2 673.5 L432.7 679 Z" fill="#ffc400" stroke="#000" stroke-width="1"/><path d="M386.8,575.1 L391.3,575.1 L395.4,576.5 L398.9,580.3 L402.3,585.5 L405.8,591.3 L408.5,597.5 L411.6,605.1 L414.4,612.0 L416.8,619.9 L418.9,629.2 L421.3,640.2 L423.0,656.8 L424.7,667.8 L424.7,648.2 L424.7,575.1 L427.5,575.1 L429.9,575.1" stroke="#e86a20" stroke-width="1.1" fill="none"/><circle cx="386.8" cy="575.1" r="1.75" fill="#e86a20"/><circle cx="391.3" cy="575.1" r="1.75" fill="#e86a20"/><circle cx="395.4" cy="576.5" r="1.75" fill="#e86a20"/><circle cx="398.9" cy="580.3" r="1.75" fill="#e86a20"/><circle cx="402.3" cy="585.5" r="1.75" fill="#e86a20"/><circle cx="405.8" cy="591.3" r="1.75" fill="#e86a20"/><circle cx="408.5" cy="597.5" r="1.75" fill="#e86a20"/><circle cx="411.6" cy="605.1" r="1.75" fill="#e86a20"/><circle cx="414.4" cy="612.0" r="1.75" fill="#e86a20"/><circle cx="416.8" cy="619.9" r="1.75" fill="#e86a20"/><circle cx="418.9" cy="629.2" r="1.75" fill="#e86a20"/><circle cx="421.3" cy="640.2" r="1.75" fill="#e86a20"/><circle cx="423.0" cy="656.8" r="1.75" fill="#e86a20"/><circle cx="424.7" cy="667.8" r="1.75" fill="#e86a20"/><circle cx="424.7" cy="648.2" r="1.75" fill="#e86a20"/><circle cx="424.7" cy="575.1" r="1.75" fill="#e86a20"/><circle cx="427.5" cy="575.1" r="1.75" fill="#e86a20"/><circle cx="429.9" cy="575.1" r="1.75" fill="#e86a20"/><text x="827.6" y="568" font-size="12.8" font-weight="bold" text-anchor="middle" fill="#000" textLength="23.5" lengthAdjust="spacingAndGlyphs" >ACC</text><rect x="714" y="571" width="262" height="101" fill="#fff" /><line x1="714" y1="575.3" x2="976" y2="575.3" stroke="#000" stroke-width="1.3" stroke-dasharray="5 5" stroke-dashoffset="5"/><rect x="712" y="570" width="2" height="104" fill="#000" /><rect x="712" y="672" width="265" height="2" fill="#000" /><line x1="709" y1="575.1" x2="712" y2="575.1" stroke="#000" stroke-width="1"/><text x="707" y="578.7" font-size="10" font-weight="normal" text-anchor="end" fill="#000" >0</text><line x1="709" y1="609.2" x2="712" y2="609.2" stroke="#000" stroke-width="1"/><text x="707" y="612.8" font-size="10" font-weight="normal" text-anchor="end" fill="#000" textLength="18.41" lengthAdjust="spacingAndGlyphs" >-100</text><line x1="709" y1="642.3" x2="712" y2="642.3" stroke="#000" stroke-width="1"/><text x="707" y="645.9" font-size="10" font-weight="normal" text-anchor="end" fill="#000" textLength="18.41" lengthAdjust="spacingAndGlyphs" >-200</text><line x1="713" y1="674" x2="713" y2="678" stroke="#000" stroke-width="1"/><text x="713" y="689" font-size="10" font-weight="normal" text-anchor="middle" fill="#000" >0</text><line x1="837.4" y1="674" x2="837.4" y2="678" stroke="#000" stroke-width="1"/><text x="837.4" y="689" font-size="10" font-weight="normal" text-anchor="middle" fill="#000" textLength="18.3" lengthAdjust="spacingAndGlyphs" >0.05</text><line x1="961.3" y1="674" x2="961.3" y2="678" stroke="#000" stroke-width="1"/><text x="961.3" y="689" font-size="10" font-weight="normal" text-anchor="middle" fill="#000" textLength="13.07" lengthAdjust="spacingAndGlyphs" >0.1</text><text x="844.5" y="703" font-size="11" font-weight="bold" text-anchor="middle" fill="#000" textLength="35" lengthAdjust="spacingAndGlyphs" >TIME (s)</text><path d="M752.7 679 L756.2 673.5 L759.7 679 Z" fill="#ffc400" stroke="#000" stroke-width="1"/><path d="M715.3,575.1 L719.4,577.6 L722.8,582.7 L726.3,588.9 L729.7,594.1 L734.2,601.7 L738.3,608.6 L742.5,615.5 L745.9,623.0 L748.7,632.0 L750.4,643.0 L750.4,665.4 L751.4,668.8 L751.4,575.1 L753.8,575.1 L756.2,575.1" stroke="#8a3a8a" stroke-width="1.1" fill="none"/><circle cx="715.3" cy="575.1" r="1.75" fill="#8a3a8a"/><circle cx="719.4" cy="577.6" r="1.75" fill="#8a3a8a"/><circle cx="722.8" cy="582.7" r="1.75" fill="#8a3a8a"/><circle cx="726.3" cy="588.9" r="1.75" fill="#8a3a8a"/><circle cx="729.7" cy="594.1" r="1.75" fill="#8a3a8a"/><circle cx="734.2" cy="601.7" r="1.75" fill="#8a3a8a"/><circle cx="738.3" cy="608.6" r="1.75" fill="#8a3a8a"/><circle cx="742.5" cy="615.5" r="1.75" fill="#8a3a8a"/><circle cx="745.9" cy="623.0" r="1.75" fill="#8a3a8a"/><circle cx="748.7" cy="632.0" r="1.75" fill="#8a3a8a"/><circle cx="750.4" cy="643.0" r="1.75" fill="#8a3a8a"/><circle cx="750.4" cy="665.4" r="1.75" fill="#8a3a8a"/><circle cx="751.4" cy="668.8" r="1.75" fill="#8a3a8a"/><circle cx="751.4" cy="575.1" r="1.75" fill="#8a3a8a"/><circle cx="753.8" cy="575.1" r="1.75" fill="#8a3a8a"/><circle cx="756.2" cy="575.1" r="1.75" fill="#8a3a8a"/><path d="M713 572.8 L718 577.8 M718 572.8 L713 577.8" stroke="#000" stroke-width="1.6"/><rect x="990" y="399" width="16" height="310" fill="#d8d5ce" /><rect x="990" y="399" width="1" height="310" fill="#8c8a86" /><rect x="1005" y="399" width="1" height="310" fill="#f8f8f8" /><rect x="990" y="399" width="16" height="15" fill="#808080" /><rect x="991" y="400" width="14" height="13" fill="#ffffff" /><rect x="992" y="401" width="13" height="12" fill="#d6d2ca" /><rect x="1004" y="400" width="1" height="13" fill="#a8a6a0" /><rect x="991" y="412" width="14" height="1" fill="#a8a6a0" /><path d="M995 409 L999 404.6 L1003 409 Z" fill="#000"/><rect x="990.5" y="414.5" width="15" height="186" fill="url(#thumb)" stroke="#0c2878"/><rect x="991" y="415" width="14" height="1" fill="#b0c8f0" /><rect x="991" y="415" width="1" height="185" fill="#a8c0ec" /><rect x="993" y="493" width="1" height="1" fill="#c8d8f4" /><rect x="994" y="494" width="1" height="1" fill="#1e3c80" /><rect x="995" y="493" width="1" height="1" fill="#c8d8f4" /><rect x="996" y="494" width="1" height="1" fill="#1e3c80" /><rect x="997" y="493" width="1" height="1" fill="#c8d8f4" /><rect x="998" y="494" width="1" height="1" fill="#1e3c80" /><rect x="999" y="493" width="1" height="1" fill="#c8d8f4" /><rect x="1000" y="494" width="1" height="1" fill="#1e3c80" /><rect x="1001" y="493" width="1" height="1" fill="#c8d8f4" /><rect x="1002" y="494" width="1" height="1" fill="#1e3c80" /><rect x="994" y="495" width="1" height="1" fill="#c8d8f4" /><rect x="995" y="496" width="1" height="1" fill="#1e3c80" /><rect x="996" y="495" width="1" height="1" fill="#c8d8f4" /><rect x="997" y="496" width="1" height="1" fill="#1e3c80" /><rect x="998" y="495" width="1" height="1" fill="#c8d8f4" /><rect x="999" y="496" width="1" height="1" fill="#1e3c80" /><rect x="1000" y="495" width="1" height="1" fill="#c8d8f4" /><rect x="1001" y="496" width="1" height="1" fill="#1e3c80" /><rect x="1002" y="495" width="1" height="1" fill="#c8d8f4" /><rect x="1003" y="496" width="1" height="1" fill="#1e3c80" /><rect x="993" y="497" width="1" height="1" fill="#c8d8f4" /><rect x="994" y="498" width="1" height="1" fill="#1e3c80" /><rect x="995" y="497" width="1" height="1" fill="#c8d8f4" /><rect x="996" y="498" width="1" height="1" fill="#1e3c80" /><rect x="997" y="497" width="1" height="1" fill="#c8d8f4" /><rect x="998" y="498" width="1" height="1" fill="#1e3c80" /><rect x="999" y="497" width="1" height="1" fill="#c8d8f4" /><rect x="1000" y="498" width="1" height="1" fill="#1e3c80" /><rect x="1001" y="497" width="1" height="1" fill="#c8d8f4" /><rect x="1002" y="498" width="1" height="1" fill="#1e3c80" /><rect x="994" y="499" width="1" height="1" fill="#c8d8f4" /><rect x="995" y="500" width="1" height="1" fill="#1e3c80" /><rect x="996" y="499" width="1" height="1" fill="#c8d8f4" /><rect x="997" y="500" width="1" height="1" fill="#1e3c80" /><rect x="998" y="499" width="1" height="1" fill="#c8d8f4" /><rect x="999" y="500" width="1" height="1" fill="#1e3c80" /><rect x="1000" y="499" width="1" height="1" fill="#c8d8f4" /><rect x="1001" y="500" width="1" height="1" fill="#1e3c80" /><rect x="1002" y="499" width="1" height="1" fill="#c8d8f4" /><rect x="1003" y="500" width="1" height="1" fill="#1e3c80" /><rect x="993" y="501" width="1" height="1" fill="#c8d8f4" /><rect x="994" y="502" width="1" height="1" fill="#1e3c80" /><rect x="995" y="501" width="1" height="1" fill="#c8d8f4" /><rect x="996" y="502" width="1" height="1" fill="#1e3c80" /><rect x="997" y="501" width="1" height="1" fill="#c8d8f4" /><rect x="998" y="502" width="1" height="1" fill="#1e3c80" /><rect x="999" y="501" width="1" height="1" fill="#c8d8f4" /><rect x="1000" y="502" width="1" height="1" fill="#1e3c80" /><rect x="1001" y="501" width="1" height="1" fill="#c8d8f4" /><rect x="1002" y="502" width="1" height="1" fill="#1e3c80" /><rect x="994" y="503" width="1" height="1" fill="#c8d8f4" /><rect x="995" y="504" width="1" height="1" fill="#1e3c80" /><rect x="996" y="503" width="1" height="1" fill="#c8d8f4" /><rect x="997" y="504" width="1" height="1" fill="#1e3c80" /><rect x="998" y="503" width="1" height="1" fill="#c8d8f4" /><rect x="999" y="504" width="1" height="1" fill="#1e3c80" /><rect x="1000" y="503" width="1" height="1" fill="#c8d8f4" /><rect x="1001" y="504" width="1" height="1" fill="#1e3c80" /><rect x="1002" y="503" width="1" height="1" fill="#c8d8f4" /><rect x="1003" y="504" width="1" height="1" fill="#1e3c80" /><rect x="993" y="505" width="1" height="1" fill="#c8d8f4" /><rect x="994" y="506" width="1" height="1" fill="#1e3c80" /><rect x="995" y="505" width="1" height="1" fill="#c8d8f4" /><rect x="996" y="506" width="1" height="1" fill="#1e3c80" /><rect x="997" y="505" width="1" height="1" fill="#c8d8f4" /><rect x="998" y="506" width="1" height="1" fill="#1e3c80" /><rect x="999" y="505" width="1" height="1" fill="#c8d8f4" /><rect x="1000" y="506" width="1" height="1" fill="#1e3c80" /><rect x="1001" y="505" width="1" height="1" fill="#c8d8f4" /><rect x="1002" y="506" width="1" height="1" fill="#1e3c80" /><rect x="994" y="507" width="1" height="1" fill="#c8d8f4" /><rect x="995" y="508" width="1" height="1" fill="#1e3c80" /><rect x="996" y="507" width="1" height="1" fill="#c8d8f4" /><rect x="997" y="508" width="1" height="1" fill="#1e3c80" /><rect x="998" y="507" width="1" height="1" fill="#c8d8f4" /><rect x="999" y="508" width="1" height="1" fill="#1e3c80" /><rect x="1000" y="507" width="1" height="1" fill="#c8d8f4" /><rect x="1001" y="508" width="1" height="1" fill="#1e3c80" /><rect x="1002" y="507" width="1" height="1" fill="#c8d8f4" /><rect x="1003" y="508" width="1" height="1" fill="#1e3c80" /><rect x="993" y="509" width="1" height="1" fill="#c8d8f4" /><rect x="994" y="510" width="1" height="1" fill="#1e3c80" /><rect x="995" y="509" width="1" height="1" fill="#c8d8f4" /><rect x="996" y="510" width="1" height="1" fill="#1e3c80" /><rect x="997" y="509" width="1" height="1" fill="#c8d8f4" /><rect x="998" y="510" width="1" height="1" fill="#1e3c80" /><rect x="999" y="509" width="1" height="1" fill="#c8d8f4" /><rect x="1000" y="510" width="1" height="1" fill="#1e3c80" /><rect x="1001" y="509" width="1" height="1" fill="#c8d8f4" /><rect x="1002" y="510" width="1" height="1" fill="#1e3c80" /><rect x="994" y="511" width="1" height="1" fill="#c8d8f4" /><rect x="995" y="512" width="1" height="1" fill="#1e3c80" /><rect x="996" y="511" width="1" height="1" fill="#c8d8f4" /><rect x="997" y="512" width="1" height="1" fill="#1e3c80" /><rect x="998" y="511" width="1" height="1" fill="#c8d8f4" /><rect x="999" y="512" width="1" height="1" fill="#1e3c80" /><rect x="1000" y="511" width="1" height="1" fill="#c8d8f4" /><rect x="1001" y="512" width="1" height="1" fill="#1e3c80" /><rect x="1002" y="511" width="1" height="1" fill="#c8d8f4" /><rect x="1003" y="512" width="1" height="1" fill="#1e3c80" /><rect x="993" y="513" width="1" height="1" fill="#c8d8f4" /><rect x="994" y="514" width="1" height="1" fill="#1e3c80" /><rect x="995" y="513" width="1" height="1" fill="#c8d8f4" /><rect x="996" y="514" width="1" height="1" fill="#1e3c80" /><rect x="997" y="513" width="1" height="1" fill="#c8d8f4" /><rect x="998" y="514" width="1" height="1" fill="#1e3c80" /><rect x="999" y="513" width="1" height="1" fill="#c8d8f4" /><rect x="1000" y="514" width="1" height="1" fill="#1e3c80" /><rect x="1001" y="513" width="1" height="1" fill="#c8d8f4" /><rect x="1002" y="514" width="1" height="1" fill="#1e3c80" /><rect x="994" y="515" width="1" height="1" fill="#c8d8f4" /><rect x="995" y="516" width="1" height="1" fill="#1e3c80" /><rect x="996" y="515" width="1" height="1" fill="#c8d8f4" /><rect x="997" y="516" width="1" height="1" fill="#1e3c80" /><rect x="998" y="515" width="1" height="1" fill="#c8d8f4" /><rect x="999" y="516" width="1" height="1" fill="#1e3c80" /><rect x="1000" y="515" width="1" height="1" fill="#c8d8f4" /><rect x="1001" y="516" width="1" height="1" fill="#1e3c80" /><rect x="1002" y="515" width="1" height="1" fill="#c8d8f4" /><rect x="1003" y="516" width="1" height="1" fill="#1e3c80" /><rect x="993" y="517" width="1" height="1" fill="#c8d8f4" /><rect x="994" y="518" width="1" height="1" fill="#1e3c80" /><rect x="995" y="517" width="1" height="1" fill="#c8d8f4" /><rect x="996" y="518" width="1" height="1" fill="#1e3c80" /><rect x="997" y="517" width="1" height="1" fill="#c8d8f4" /><rect x="998" y="518" width="1" height="1" fill="#1e3c80" /><rect x="999" y="517" width="1" height="1" fill="#c8d8f4" /><rect x="1000" y="518" width="1" height="1" fill="#1e3c80" /><rect x="1001" y="517" width="1" height="1" fill="#c8d8f4" /><rect x="1002" y="518" width="1" height="1" fill="#1e3c80" /><rect x="994" y="519" width="1" height="1" fill="#c8d8f4" /><rect x="995" y="520" width="1" height="1" fill="#1e3c80" /><rect x="996" y="519" width="1" height="1" fill="#c8d8f4" /><rect x="997" y="520" width="1" height="1" fill="#1e3c80" /><rect x="998" y="519" width="1" height="1" fill="#c8d8f4" /><rect x="999" y="520" width="1" height="1" fill="#1e3c80" /><rect x="1000" y="519" width="1" height="1" fill="#c8d8f4" /><rect x="1001" y="520" width="1" height="1" fill="#1e3c80" /><rect x="1002" y="519" width="1" height="1" fill="#c8d8f4" /><rect x="1003" y="520" width="1" height="1" fill="#1e3c80" /><rect x="993" y="521" width="1" height="1" fill="#c8d8f4" /><rect x="994" y="522" width="1" height="1" fill="#1e3c80" /><rect x="995" y="521" width="1" height="1" fill="#c8d8f4" /><rect x="996" y="522" width="1" height="1" fill="#1e3c80" /><rect x="997" y="521" width="1" height="1" fill="#c8d8f4" /><rect x="998" y="522" width="1" height="1" fill="#1e3c80" /><rect x="999" y="521" width="1" height="1" fill="#c8d8f4" /><rect x="1000" y="522" width="1" height="1" fill="#1e3c80" /><rect x="1001" y="521" width="1" height="1" fill="#c8d8f4" /><rect x="1002" y="522" width="1" height="1" fill="#1e3c80" /><rect x="990" y="694" width="16" height="15" fill="#808080" /><rect x="991" y="695" width="14" height="13" fill="#ffffff" /><rect x="992" y="696" width="13" height="12" fill="#d6d2ca" /><rect x="1004" y="695" width="1" height="13" fill="#a8a6a0" /><rect x="991" y="707" width="14" height="1" fill="#a8a6a0" /><path d="M995 700 L999 704.4 L1003 700 Z" fill="#000"/><rect x="1006" y="399" width="2" height="310" fill="#f4f4f4" /><rect x="8" y="710" width="1000" height="1" fill="#ffffff" /><rect x="8" y="711" width="1000" height="1" fill="#808080" /><rect x="8" y="712" width="1000" height="17" fill="#d4d0c8" /><rect x="9" y="712" width="26" height="17" fill="#0000ff" /><rect x="8" y="729" width="1000" height="1" fill="#808080" /><rect x="8" y="711" width="1" height="18" fill="#808080" /><text x="347.5" y="724" font-size="11" font-weight="normal" text-anchor="start" fill="#10208a" textLength="321" lengthAdjust="spacingAndGlyphs" >Step number 27/1050 (Estimated remaining time: 1 hour 7 minutes)</text></svg></body></html>
